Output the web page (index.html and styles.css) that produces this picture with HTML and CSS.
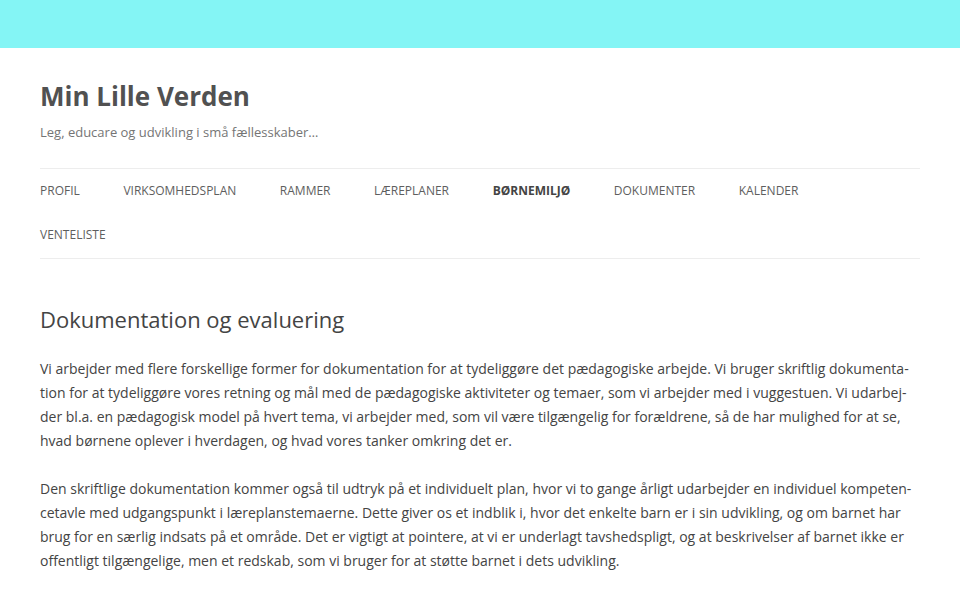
FILE: index.html
```html
<!DOCTYPE html>
<html lang="da">
<head>
<meta charset="utf-8">
<title>Min Lille Verden</title>
<link rel="stylesheet" href="styles.css">
</head>
<body>
<div class="topbar"></div>
<div class="page">
  <header class="site-header">
    <h1 class="site-title">Min Lille Verden</h1>
    <p class="site-description">Leg, educare og udvikling i små fællesskaber…</p>
    <nav class="main-nav">
      <ul>
        <li><a href="#">Profil</a></li>
        <li><a href="#">Virksomhedsplan</a></li>
        <li><a href="#">Rammer</a></li>
        <li><a href="#">Læreplaner</a></li>
        <li class="current"><a href="#">Børnemiljø</a></li>
        <li><a href="#">Dokumenter</a></li>
        <li><a href="#">Kalender</a></li>
        <li><a href="#">Venteliste</a></li>
      </ul>
    </nav>
  </header>
  <main class="content">
    <h2 class="entry-title">Dokumentation og evaluering</h2>
    <p>Vi arbejder med flere forskellige former for dokumentation for at tydeliggøre det pædagogiske arbejde. Vi bruger skriftlig dokumenta&shy;tion for at tydeliggøre vores retning og mål med de pædagogiske aktiviteter og temaer, som vi arbejder med i vuggestuen. Vi udarbej&shy;der bl.a. en pædagogisk model på hvert tema, vi arbejder med, som vil være tilgængelig for forældrene, så de har mulighed for at se, hvad børnene oplever i hverdagen, og hvad vores tanker omkring det er.</p>
    <p>Den skriftlige dokumentation kommer også til udtryk på et individuelt plan, hvor vi to gange årligt udarbejder en individuel kompeten&shy;cetavle med udgangspunkt i læreplanstemaerne. Dette giver os et indblik i, hvor det enkelte barn er i sin udvikling, og om barnet har brug for en særlig indsats på et område. Det er vigtigt at pointere, at vi er underlagt tavshedspligt, og at beskrivelser af barnet ikke er offentligt tilgængelige, men et redskab, som vi bruger for at støtte barnet i dets udvikling.</p>
  </main>
</div>
</body>
</html>
```

FILE: styles.css
```css
* { box-sizing: border-box; }
html, body { margin: 0; padding: 0; }
body {
  background: #fff;
  font-family: "Open Sans", "Liberation Sans", sans-serif;
  color: #444;
}
.topbar {
  height: 48px;
  background: #84f5f5;
}
.page {
  padding: 0 40px;
}
.site-header {
  padding-top: 28px;
}
.site-title {
  margin: 0;
  font-size: 26px;
  line-height: 40px;
  font-weight: 700;
  color: #515151;
}
.site-description {
  margin: 4px 0 0;
  font-size: 13px;
  line-height: 24px;
  color: #757575;
}
.main-nav {
  margin-top: 24px;
  border-top: 1px solid #ededed;
  border-bottom: 1px solid #ededed;
}
.main-nav ul {
  list-style: none;
  margin: 0;
  padding: 0;
  display: flex;
  flex-wrap: wrap;
}
.main-nav li {
  margin-right: 43.6px;
  line-height: 44.3px;
  font-size: 12px;
  text-transform: uppercase;
}
.main-nav a {
  color: #5e5e5e;
  text-decoration: none;
}
.main-nav .current a {
  font-weight: 700;
  color: #444;
}
.content {
  padding-top: 45px;
}
.entry-title {
  margin: 0 0 23px;
  font-size: 22px;
  line-height: 30px;
  font-weight: 400;
  color: #444;
}
.content p {
  margin: 0 0 24px;
  font-size: 14px;
  line-height: 24px;
  color: #444;
}
```
